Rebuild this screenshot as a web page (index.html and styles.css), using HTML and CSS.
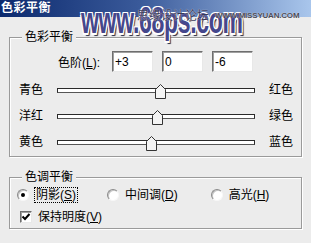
FILE: index.html
```html
<!DOCTYPE html>
<html lang="zh-CN">
<head>
    <meta charset="UTF-8">
    <title>色彩平衡</title>
    <link rel="stylesheet" href="styles.css">
</head>
<body>

    <div class="window">
        <div class="titlebar">色彩平衡</div>

        <!-- watermark over the title bar -->
        <div class="watermark">
            <span class="wm-big">www.68ps.com</span>
            <span class="wm-cn">思缘设计论坛</span>
            <span class="wm-url">WWW.MISSYUAN.COM</span>
        </div>

        <fieldset class="group balance">
            <legend>色彩平衡</legend>

            <div class="levels">
                <label class="levels-label">色阶(<u>L</u>):</label>
                <input type="text" value="+3">
                <input type="text" value="0">
                <input type="text" value="-6">
            </div>

            <div class="slider-row">
                <span class="left">青色</span>
                <div class="track">
                    <svg class="thumb" style="left: 97px" width="11" height="15" viewBox="0 0 11 15">
                        <polygon points="5.5,0.5 10.5,5.5 10.5,14.5 0.5,14.5 0.5,5.5" />
                    </svg>
                </div>
                <span class="right">红色</span>
            </div>

            <div class="slider-row">
                <span class="left">洋红</span>
                <div class="track">
                    <svg class="thumb" style="left: 94px" width="11" height="15" viewBox="0 0 11 15">
                        <polygon points="5.5,0.5 10.5,5.5 10.5,14.5 0.5,14.5 0.5,5.5" />
                    </svg>
                </div>
                <span class="right">绿色</span>
            </div>

            <div class="slider-row">
                <span class="left">黄色</span>
                <div class="track">
                    <svg class="thumb" style="left: 88px" width="11" height="15" viewBox="0 0 11 15">
                        <polygon points="5.5,0.5 10.5,5.5 10.5,14.5 0.5,14.5 0.5,5.5" />
                    </svg>
                </div>
                <span class="right">蓝色</span>
            </div>
        </fieldset>

        <fieldset class="group tone">
            <legend>色调平衡</legend>

            <div class="tone-row">
                <div class="radio-item">
                    <span class="radio checked"></span>
                    <span class="focus">阴影(<u>S</u>)</span>
                </div>
                <div class="radio-item mid">
                    <span class="radio"></span>
                    <span>中间调(<u>D</u>)</span>
                </div>
                <div class="radio-item high">
                    <span class="radio"></span>
                    <span>高光(<u>H</u>)</span>
                </div>
            </div>

            <div class="tone-row">
                <div class="radio-item">
                    <span class="checkbox">
                        <svg width="10" height="10" viewBox="0 0 10 10">
                            <polyline points="1.5,4.5 4,7 8.5,2" fill="none" stroke="#000" stroke-width="2" />
                        </svg>
                    </span>
                    <span>保持明度(<u>V</u>)</span>
                </div>
            </div>
        </fieldset>
    </div>

</body>
</html>
```

FILE: styles.css
```css
/* Boîte de dialogue Balance des couleurs */
body {
    margin: 0;
    font-family: "Liberation Sans", "Noto Sans CJK SC", sans-serif;
    font-size: 12px;
    color: #000;
    background: #ececec;
}

.window {
    position: relative;
    width: 311px;
    height: 243px;
    overflow: hidden;
    background: #ececec;
}

.titlebar {
    height: 17px;
    line-height: 16px;
    padding-left: 1px;
    color: #fff;
    font-weight: bold;
    font-size: 12px;
    letter-spacing: 0.5px;
    background: linear-gradient(to right, #0c2a6e 0%, #3a5a9a 45%, #a9c6ec 100%);
}

.watermark {
    position: absolute;
    left: 0;
    top: 0;
    width: 311px;
    height: 40px;
    pointer-events: none;
}

.wm-big {
    position: absolute;
    left: 81px;
    top: 0;
    font-family: "Liberation Sans", sans-serif;
    font-weight: bold;
    font-size: 36px;
    letter-spacing: -0.5px;
    color: #45478c;
    transform: scaleX(0.64);
    transform-origin: left top;
    text-shadow: -1.5px -1.5px 0 #fff, 1.5px -1.5px 0 #fff, -1.5px 1.5px 0 #fff, 1.5px 1.5px 0 #fff, 3px 3px 1px #2a2a40;
}

.wm-cn {
    position: absolute;
    left: 137px;
    top: 8px;
    font-family: "Noto Sans CJK SC", sans-serif;
    font-size: 12px;
    line-height: 14px;
    color: #3a3a58;
    text-shadow: 0 0 1px #fff;
}

.wm-url {
    position: absolute;
    left: 215px;
    top: 11px;
    font-family: "Liberation Sans", sans-serif;
    font-weight: bold;
    font-size: 8px;
    letter-spacing: -0.2px;
    color: #4a4a55;
    text-shadow: 0 0 1px #fff;
}

/* group boxes */
.group {
    box-sizing: border-box;
    width: 293px;
    margin: 0 0 0 9px;
    padding: 0;
    border: 1px solid #9a9a9a;
    box-shadow: 1px 1px 0 #fff, inset 1px 1px 0 #fff;
    min-inline-size: 0;
}

.group legend {
    margin-left: 12px;
    padding: 0 3px;
    line-height: 14px;
    background: #ececec;
}

.balance {
    margin-top: 13px;
    padding-bottom: 1px;
}

.tone {
    margin-top: 13px;
}

.levels {
    display: flex;
    align-items: center;
    margin: 7px 0 5px;
    padding-left: 48px;
    height: 21px;
}

.levels-label {
    width: 54px;
}

.levels input {
    box-sizing: border-box;
    width: 41px;
    height: 21px;
    margin: 0 9px 0 0;
    padding: 0 2px;
    font-family: "Liberation Sans", sans-serif;
    font-size: 12px;
    background: #fff;
    border: 1px solid;
    border-color: #6e6e6e #e8e8e8 #e8e8e8 #6e6e6e;
    box-shadow: inset 1px 1px 0 #a0a0a0;
    outline: none;
}

/* sliders */
.slider-row {
    display: flex;
    align-items: center;
    height: 26px;
    padding-left: 9px;
}

.slider-row .left {
    width: 38px;
    line-height: 14px;
}

.slider-row .right {
    margin-left: 14px;
    line-height: 14px;
}

.track {
    position: relative;
    box-sizing: border-box;
    width: 198px;
    height: 5px;
    background: #fff;
    border: 1px solid #2a2a2a;
    border-bottom-color: #555;
}

.thumb {
    position: absolute;
    top: -5px;
}

.thumb polygon {
    fill: #f4f4f4;
    stroke: #333;
    stroke-width: 1;
}

/* tone balance */
.tone-row {
    display: flex;
    align-items: center;
    height: 22px;
    padding-left: 7px;
}

.radio-item {
    display: flex;
    align-items: center;
    line-height: 14px;
}

.radio-item.mid {
    margin-left: 30px;
}

.radio-item.high {
    margin-left: 33px;
}

.radio {
    position: relative;
    box-sizing: border-box;
    width: 12px;
    height: 12px;
    margin-right: 6px;
    border-radius: 50%;
    background: #fff;
    border: 1px solid;
    border-color: #8a8a8a #f8f8f8 #f8f8f8 #8a8a8a;
    box-shadow: inset 1px 1px 0 #c4c4c4;
}

.radio.checked::after {
    content: "";
    position: absolute;
    left: 3px;
    top: 3px;
    width: 4px;
    height: 4px;
    border-radius: 50%;
    background: #000;
}

.focus {
    padding: 0 1px;
    outline: 1px dotted #000;
    outline-offset: 0;
}

.checkbox {
    display: flex;
    align-items: center;
    justify-content: center;
    box-sizing: border-box;
    width: 12px;
    height: 12px;
    margin: 0 6px 0 3px;
    background: #fff;
    border: 1px solid;
    border-color: #6e6e6e #e8e8e8 #e8e8e8 #6e6e6e;
    box-shadow: inset 1px 1px 0 #a0a0a0;
}
```
